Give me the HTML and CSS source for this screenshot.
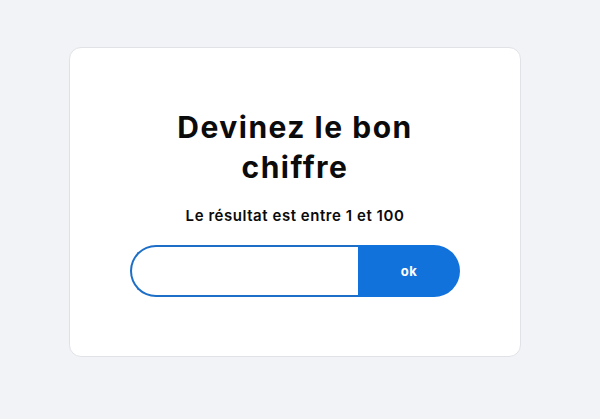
FILE: index.html
```html
<!DOCTYPE html>
<html lang="fr">
<head>
<meta charset="utf-8">
<title>Devinez le bon chiffre</title>
<link rel="stylesheet" href="styles.css">
</head>
<body>
<main class="page">
  <section class="card">
    <h1 class="title">Devinez le bon chiffre</h1>
    <p class="subtitle">Le résultat est entre 1 et 100</p>
    <form class="guess" onsubmit="return false">
      <input class="guess-input" type="text" aria-label="Votre nombre">
      <button class="guess-btn" type="submit">ok</button>
    </form>
  </section>
</main>
</body>
</html>
```
FILE: styles.css
```css
* { box-sizing: border-box; }
html, body { margin: 0; padding: 0; }
body {
  background: #f2f3f7;
  font-family: Inter, "DejaVu Sans", sans-serif;
  color: #0b0b0b;
  width: 600px;
  height: 419px;
  overflow: hidden;
}
.page {
  padding: 47px 0 0 69px;
}
.card {
  width: 452px;
  height: 310px;
  background: #ffffff;
  border: 1px solid #e1e2e7;
  border-radius: 12px;
  padding: 59px 0 0;
  display: flex;
  flex-direction: column;
  align-items: center;
}
.title {
  margin: 0;
  width: 290px;
  text-align: center;
  font-size: 30px;
  line-height: 40px;
  font-weight: 700;
  letter-spacing: 1.5px;
}
.subtitle {
  margin: 19px 0 0;
  font-size: 15px;
  line-height: 20px;
  font-weight: 600;
  letter-spacing: 0.55px;
}
.guess {
  margin-top: 19px;
  display: flex;
  width: 330px;
  height: 52px;
}
.guess-input {
  flex: 1 1 auto;
  min-width: 0;
  width: 0;
  height: 52px;
  border: 2px solid #1d6ec6;
  border-right: none;
  border-radius: 26px 0 0 26px;
  outline: none;
  padding: 0 20px;
  font: inherit;
  background: #fff;
}
.guess-btn {
  flex: 0 0 102px;
  height: 52px;
  border: none;
  border-radius: 0 26px 26px 0;
  background: #1272dc;
  color: #ffffff;
  font-family: inherit;
  font-size: 13px;
  font-weight: 700;
  letter-spacing: 0.4px;
  cursor: pointer;
}
```
